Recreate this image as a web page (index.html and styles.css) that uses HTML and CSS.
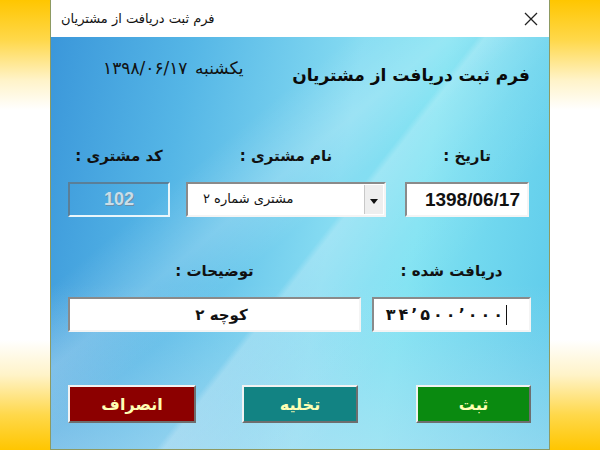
FILE: index.html
```html
<!DOCTYPE html>
<html lang="fa">
<head>
<meta charset="utf-8">
<title>فرم ثبت دریافت از مشتریان</title>
<link rel="stylesheet" href="styles.css">
</head>
<body>
<div class="window">
  <div class="titlebar">
    <span class="title" dir="rtl">فرم ثبت دریافت از مشتریان</span>
    <svg class="close" width="14" height="14" viewBox="0 0 14 14"><path d="M1 1 L13 13 M13 1 L1 13" stroke="#222" stroke-width="1.3" fill="none"/></svg>
  </div>
  <div class="client">
    <div class="header">
      <span class="today" dir="rtl">یکشنبه <bdi dir="ltr">۱۳۹۸/۰۶/۱۷</bdi></span>
      <h1 class="heading" dir="rtl">فرم ثبت دریافت از مشتریان</h1>
    </div>
    <div class="row row-one">
      <div class="field f-code">
        <span class="label" dir="rtl">کد مشتری :</span>
        <div class="box box-disabled">102</div>
      </div>
      <div class="field f-name">
        <span class="label" dir="rtl">نام مشتری :</span>
        <div class="box box-combo">
          <span class="combo-text" dir="rtl">مشتری شماره ۲</span>
          <span class="combo-btn"><svg width="8" height="5" viewBox="0 0 8 5"><path d="M0 0 H8 L4 5 Z" fill="#111"/></svg></span>
        </div>
      </div>
      <div class="field f-date">
        <span class="label" dir="rtl">تاریخ :</span>
        <div class="box box-date">1398/06/17</div>
      </div>
    </div>
    <div class="row row-two">
      <div class="field f-desc">
        <span class="label" dir="rtl">توضیحات :</span>
        <div class="box box-text" dir="rtl">کوچه ۲</div>
      </div>
      <div class="field f-recv">
        <span class="label" dir="rtl">دریافت شده :</span>
        <div class="box box-amount"><span class="amount" dir="ltr"><span class="d">۳</span><span class="d">۴</span><span class="d">’</span><span class="d">۵</span><span class="d">۰</span><span class="d">۰</span><span class="d">’</span><span class="d">۰</span><span class="d">۰</span><span class="d">۰</span></span><span class="caret"></span></div>
      </div>
    </div>
    <div class="buttons">
      <button class="btn btn-cancel">انصراف</button>
      <button class="btn btn-clear">تخلیه</button>
      <button class="btn btn-save">ثبت</button>
    </div>
  </div>
</div>
</body>
</html>
```
FILE: styles.css
```css
html, body {
  margin: 0;
  padding: 0;
}
body {
  width: 600px;
  height: 450px;
  overflow: hidden;
  font-family: "DejaVu Sans", "Liberation Sans", sans-serif;
  background: linear-gradient(to bottom, #ffc600 0px, #ffd84a 40px, #fff3c8 80px, #ffffff 110px, #ffffff 340px, #fff3c8 375px, #ffd84a 415px, #ffc600 450px);
}
.window {
  width: 498px;
  height: 449px;
  margin: 0 auto;
  border: 1px solid #8d9a62;
  border-top: none;
  display: flex;
  flex-direction: column;
  background: #fff;
}
.titlebar {
  height: 37px;
  flex: none;
  background: #ffffff;
  display: flex;
  align-items: center;
  justify-content: space-between;
  padding: 0 11px 0 10px;
}
.title {
  font-size: 13px;
  color: #111;
}
.close {
  display: block;
}
.client {
  flex: 1;
  display: flex;
  flex-direction: column;
  padding: 0 18px 0 17px;
  background:
    linear-gradient(128deg, rgba(255,255,255,0) 0%, rgba(255,255,255,0) 52%, rgba(255,255,255,0.22) 53%, rgba(255,255,255,0.08) 62%, rgba(255,255,255,0) 72%),
    linear-gradient(140deg, rgba(255,255,255,0) 30%, rgba(255,255,255,0.18) 40%, rgba(255,255,255,0) 48%),
    linear-gradient(to bottom, rgba(255,255,255,0) 60%, rgba(200,230,245,0.45) 100%),
    linear-gradient(100deg, #3b97da 0%, #55b6e6 25%, #86dcf2 55%, #7fe2f2 70%, #5cc9ea 100%);
}
.header {
  display: flex;
  justify-content: space-between;
  align-items: flex-start;
  padding: 21px 1px 0 35px;
  height: 58px;
  box-sizing: border-box;
}
.today {
  font-size: 17px;
  color: #111;
  line-height: 20px;
  word-spacing: 2px;
}
.heading {
  margin: 4px 0 0;
  font-size: 17px;
  font-weight: bold;
  color: #0a0a0a;
  line-height: 26px;
}
.row {
  display: flex;
  direction: ltr;
}
.row-one {
  margin-top: 49px;
  gap: 16px;
}
.row-one .f-date {
  margin-left: 3px;
}
.row-two {
  margin-top: 42px;
  gap: 11px;
}
.field {
  display: flex;
  flex-direction: column;
  align-items: center;
}
.label {
  font-size: 15px;
  font-weight: bold;
  color: #111;
  line-height: 24px;
  height: 24px;
  margin-bottom: 14px;
}
.box {
  box-sizing: border-box;
  height: 35px;
  background: #fff;
  border-top: 2px solid #8a8a8a;
  border-left: 2px solid #8a8a8a;
  border-right: 2px solid #f4f4f4;
  border-bottom: 2px solid #f4f4f4;
  display: flex;
  align-items: center;
  font-size: 14px;
  color: #111;
  white-space: nowrap;
}
.f-code .box { width: 102px; }
.f-name .box { width: 200px; }
.f-date .box { width: 124px; }
.f-desc .box { width: 293px; }
.f-recv .box { width: 159px; }
.box-disabled {
  background: transparent;
  border-top-color: #5a7f98;
  border-left-color: #5a7f98;
  border-right-color: #e9f6fb;
  border-bottom-color: #e9f6fb;
  justify-content: center;
  font-family: "Liberation Sans", Arial, sans-serif;
  font-weight: bold;
  font-size: 18px;
  color: #c9dde8;
  text-shadow: 1px 1px 0 #6a8ea6;
}
.box-combo {
  justify-content: space-between;
  padding: 0 1px 0 15px;
}
.combo-text {
  font-size: 13px;
  margin-bottom: 3px;
}
.combo-btn {
  width: 18px;
  height: 29px;
  background: #eeeeee;
  border-left: 1px solid #c8c8c8;
  display: flex;
  align-items: center;
  justify-content: center;
}
.combo-btn svg {
  display: block;
  margin-top: 3px;
}
.box-date {
  justify-content: flex-end;
  padding-right: 7px;
  font-family: "Liberation Sans", Arial, sans-serif;
  font-weight: bold;
  font-size: 19px;
}
.box-text {
  justify-content: center;
  font-weight: bold;
  font-size: 15px;
  padding-left: 14px;
}
.box-amount {
  justify-content: flex-end;
  padding-right: 22px;
  font-size: 16px;
  font-weight: bold;
}
.amount {
  display: flex;
  direction: ltr;
}
.amount .d {
  margin-right: 3px;
}
.caret {
  display: inline-block;
  width: 1px;
  height: 20px;
  background: #111;
  margin-left: 0;
}
.buttons {
  display: flex;
  direction: ltr;
  margin-top: 53px;
}
.btn {
  box-sizing: border-box;
  height: 38px;
  font-family: "DejaVu Sans", sans-serif;
  font-weight: bold;
  font-size: 16px;
  color: #ffffb4;
  border-top: 2px solid #f2f2f2;
  border-left: 2px solid #f2f2f2;
  border-right: 2px solid #6e6e6e;
  border-bottom: 2px solid #6e6e6e;
  padding: 0;
}
.btn-cancel {
  width: 128px;
  background: #8c0000;
}
.btn-clear {
  width: 116px;
  margin-left: 46px;
  background: #128383;
}
.btn-save {
  width: 115px;
  margin-left: 58px;
  background: #0a8a10;
}
```
